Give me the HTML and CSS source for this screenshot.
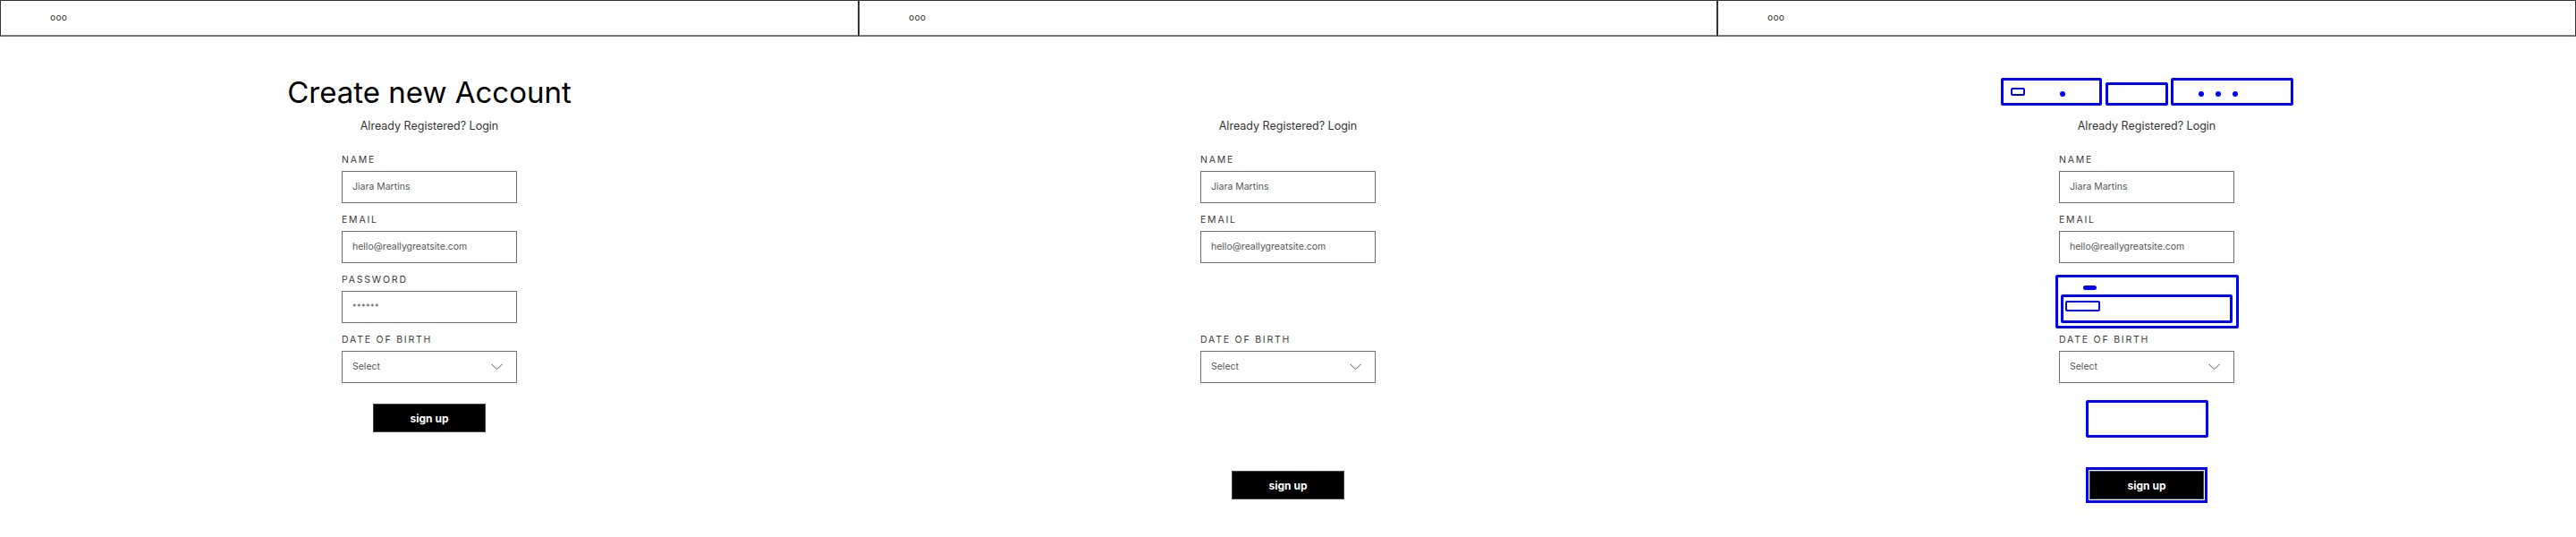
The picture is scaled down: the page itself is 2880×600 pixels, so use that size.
FILE: index.html
```html
<!DOCTYPE html>
<html lang="en">
<head>
<meta charset="utf-8">
<title>Create new Account</title>
<link rel="stylesheet" href="styles.css">
</head>
<body>
<div class="screens">
  <!-- Screen 1 -->
  <section class="screen">
    <header class="topbar"><span class="dots">ooo</span></header>
    <main class="content">
      <div class="title-slot"><h1 class="title">Create new Account</h1></div>
      <p class="login">Already Registered? Login</p>
      <form class="form">
        <div class="field"><label class="label">NAME</label><div class="input">Jiara Martins</div></div>
        <div class="field"><label class="label">EMAIL</label><div class="input">hello@reallygreatsite.com</div></div>
        <div class="field"><label class="label">PASSWORD</label><div class="input pw">******</div></div>
        <div class="field"><label class="label">DATE OF BIRTH</label><div class="input select"><span>Select</span><svg class="chev" width="13" height="8" viewBox="0 0 13 8"><path d="M0.5 0.8 L6.5 6.8 L12.5 0.8" fill="none" stroke="#555" stroke-width="1"/></svg></div></div>
      </form>
      <div class="btn-wrap first"><button class="btn" type="button">sign up</button></div>
    </main>
  </section>

  <!-- Screen 2 -->
  <section class="screen">
    <header class="topbar"><span class="dots">ooo</span></header>
    <main class="content">
      <div class="title-slot"><h1 class="title is-hidden">Create new Account</h1></div>
      <p class="login">Already Registered? Login</p>
      <form class="form">
        <div class="field"><label class="label">NAME</label><div class="input">Jiara Martins</div></div>
        <div class="field"><label class="label">EMAIL</label><div class="input">hello@reallygreatsite.com</div></div>
        <div class="field is-hidden"><label class="label">PASSWORD</label><div class="input pw">******</div></div>
        <div class="field"><label class="label">DATE OF BIRTH</label><div class="input select"><span>Select</span><svg class="chev" width="13" height="8" viewBox="0 0 13 8"><path d="M0.5 0.8 L6.5 6.8 L12.5 0.8" fill="none" stroke="#555" stroke-width="1"/></svg></div></div>
      </form>
      <div class="btn-wrap low"><button class="btn" type="button">sign up</button></div>
    </main>
  </section>

  <!-- Screen 3 -->
  <section class="screen">
    <header class="topbar"><span class="dots">ooo</span></header>
    <main class="content">
      <div class="title-slot anno-row">
        <div class="abox abox-1"><span class="mini"></span><span class="bdot"></span></div>
        <div class="abox abox-2"></div>
        <div class="abox abox-3"><span class="bdot"></span><span class="bdot"></span><span class="bdot"></span></div>
      </div>
      <p class="login">Already Registered? Login</p>
      <form class="form">
        <div class="field"><label class="label">NAME</label><div class="input">Jiara Martins</div></div>
        <div class="field"><label class="label">EMAIL</label><div class="input">hello@reallygreatsite.com</div></div>
        <div class="slot">
          <div class="field is-hidden"><label class="label">PASSWORD</label><div class="input pw">******</div></div>
          <div class="anno-pw">
            <span class="pill"></span>
            <div class="anno-inner"><span class="mini2"></span></div>
          </div>
        </div>
        <div class="field"><label class="label">DATE OF BIRTH</label><div class="input select"><span>Select</span><svg class="chev" width="13" height="8" viewBox="0 0 13 8"><path d="M0.5 0.8 L6.5 6.8 L12.5 0.8" fill="none" stroke="#555" stroke-width="1"/></svg></div></div>
      </form>
      <div class="anno-empty"></div>
      <div class="btn-wrap outlined"><button class="btn" type="button">sign up</button></div>
    </main>
  </section>
</div>
</body>
</html>
```

FILE: styles.css
```css
* { box-sizing: border-box; }

html, body {
  margin: 0;
  padding: 0;
  background: #ffffff;
}

body {
  font-family: "Inter", "Liberation Sans", sans-serif;
  color: #222;
}

.screens {
  display: grid;
  grid-template-columns: repeat(3, 960px);
  width: 2880px;
}

.screen {
  display: flex;
  flex-direction: column;
  height: 600px;
}

.topbar {
  height: 41px;
  border: 1px solid #333;
  border-bottom: 2px solid #777;
  display: flex;
  align-items: center;
  padding-left: 55px;
}

.dots {
  font-family: "DejaVu Sans", sans-serif;
  font-size: 10px;
  line-height: 10px;
  color: #333;
  letter-spacing: 0.3px;
}

.content {
  display: flex;
  flex-direction: column;
  align-items: center;
}

.title-slot {
  margin-top: 40px;
  height: 44px;
  display: flex;
  justify-content: center;
}

.title {
  margin: 0;
  font-family: "Inter", "Liberation Sans", sans-serif;
  font-weight: 400;
  font-size: 33px;
  line-height: 44px;
  color: #000;
  white-space: nowrap;
  letter-spacing: 0;
}

.is-hidden { visibility: hidden; }

.login {
  margin: 6px 0 0;
  font-size: 12.5px;
  line-height: 20px;
  color: #333;
}

.form {
  margin-top: 20px;
  width: 196px;
  display: flex;
  flex-direction: column;
  gap: 11px;
}

.field {
  display: flex;
  flex-direction: column;
}

.label {
  font-size: 10.5px;
  line-height: 16px;
  letter-spacing: 1.8px;
  color: #3a3a3a;
}

.input {
  margin-top: 4px;
  height: 36px;
  border: 1px solid #707070;
  display: flex;
  align-items: center;
  padding: 0 11px 2px;
  font-size: 10.5px;
  color: #555;
}

.input.pw {
  font-size: 9px;
  letter-spacing: 0.5px;
}

.select {
  justify-content: space-between;
  padding-right: 15px;
}

.chev { display: block; margin-top: 2px; }

.btn-wrap { display: flex; justify-content: center; }
.btn-wrap.first { margin-top: 23px; }
.btn-wrap.low { margin-top: 98px; }

.btn {
  width: 126px;
  height: 32px;
  background: #000;
  border: 1px solid #444;
  color: #fff;
  font-family: "Inter", "Liberation Sans", sans-serif;
  font-weight: 700;
  font-size: 12px;
  padding: 0;
  cursor: pointer;
}

/* Annotation (wireframe) boxes on screen 3 */
.anno-row {
  align-items: flex-end;
  padding-bottom: 7px;
}

.abox {
  border: 3px solid #0000ff;
  border-radius: 2px;
  display: flex;
  align-items: center;
}

.abox-1 { width: 113px; height: 31px; padding-left: 8px; }
.abox-2 { width: 70px; height: 26px; margin-left: 4px; }
.abox-3 { width: 137px; height: 31px; margin-left: 3px; padding-left: 28px; gap: 13px; }

.mini {
  width: 16px;
  height: 9px;
  border: 2.5px solid #0000ff;
  border-radius: 2px;
}

.bdot {
  width: 6px;
  height: 6px;
  border-radius: 50%;
  background: #0000ff;
  margin-top: 5px;
}

.abox-1 .bdot { margin-left: 39px; }

.slot { position: relative; }

.anno-pw {
  position: absolute;
  top: 2px;
  left: -4px;
  width: 205px;
  height: 60px;
  border: 3px solid #0000ff;
  border-radius: 2px;
  display: flex;
  flex-direction: column;
  align-items: flex-start;
}

.pill {
  margin: 9px 0 0 28px;
  width: 15px;
  height: 5px;
  border-radius: 3px;
  background: #0000ff;
}

.anno-inner {
  margin: 5px 0 0 3px;
  width: 192px;
  height: 32px;
  border: 3px solid #0000ff;
  border-radius: 2px;
  padding: 4px 0 0 2px;
}

.mini2 {
  display: block;
  width: 39px;
  height: 12px;
  border: 2.5px solid #0000ff;
  border-radius: 2px;
}

.anno-empty {
  margin-top: 19px;
  width: 137px;
  height: 42px;
  border: 3px solid #0000ff;
  border-radius: 2px;
}

.btn-wrap.outlined {
  margin-top: 37px;
}

.btn-wrap.outlined .btn {
  outline: 3px solid #0000ff;
  outline-offset: 1px;
  width: 128px;
}
```
